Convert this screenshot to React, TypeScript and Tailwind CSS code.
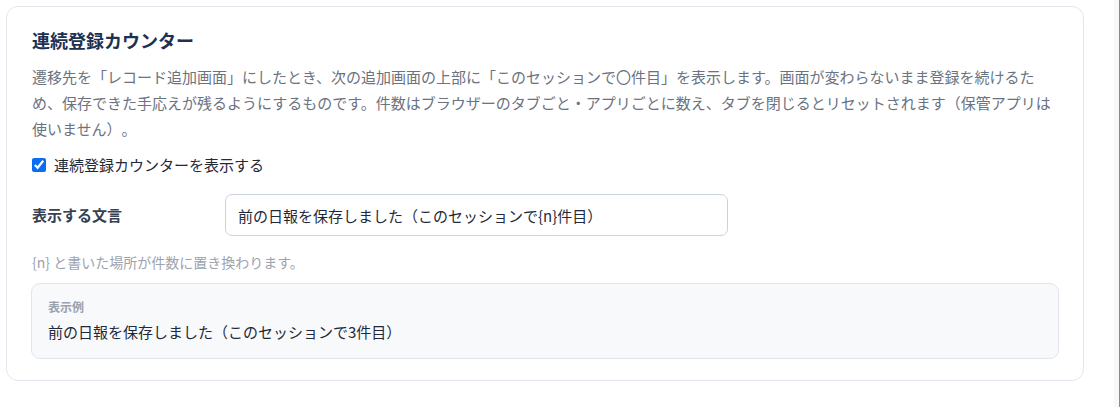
import React from "react";

export default function App() {
  return (
    <div
      className="flex w-[1120px] h-[407px] bg-white overflow-hidden [text-spacing-trim:space-all]"
      style={{ fontFamily: '"Noto Sans CJK JP", "Noto Sans", sans-serif' }}
    >
      <div className="flex-1 pl-[6px] pt-[6px]">
        <div className="w-[1078px] rounded-[12px] border border-[#e3e7ed] bg-white px-[24px] pt-[20px] pb-[21px]">
          <h2 className="pl-[1px] text-[18px] leading-[26px] font-bold text-[#1d3150]">連続登録カウンター</h2>
          <p className="mt-[11px] pl-[1px] text-[15px] leading-[26px] text-[#6b7280] whitespace-nowrap">
            遷移先を「レコード追加画面」にしたとき、次の追加画面の上部に「このセッションで〇件目」を表示します。画面が変わらないまま登録を続けるた
            <br />
            め、保存できた手応えが残るようにするものです。件数はブラウザーのタブごと・アプリごとに数え、タブを閉じるとリセットされます（保管アプリは
            <br />
            使いません）。
          </p>
          <label className="mt-[12px] flex h-[22px] items-center gap-[8px] pl-[1px]">
            <input
              type="checkbox"
              defaultChecked
              className="m-0 h-[14px] w-[14px] accent-[#0b6df2]"
            />
            <span className="text-[15px] leading-[22px] text-[#1f2937]">連続登録カウンターを表示する</span>
          </label>
          <div className="mt-[18px] flex items-center pl-[1px]">
            <div className="w-[193px] text-[15px] font-bold leading-[22px] text-[#374151]">表示する文言</div>
            <input
              type="text"
              defaultValue="前の日報を保存しました（このセッションで{n}件目）"
              className="h-[42px] w-[503px] rounded-[7px] border border-[#cbd3df] bg-white px-[12px] text-[15px] text-[#1f2937] outline-none"
            />
          </div>
          <p className="mt-[16px] pl-[1px] text-[14px] leading-[20px] text-[#9ca3af]">{"{n} と書いた場所が件数に置き換わります。"}</p>
          <div className="mt-[11px] rounded-[9px] border border-[#e2e6ec] bg-[#f7f9fb] px-[16px] pt-[14px] pb-[14px]">
            <div className="text-[12px] font-bold leading-[18px] text-[#9aa1ad]">表示例</div>
            <div className="mt-[4px] text-[15px] leading-[24px] text-[#1f2937]">前の日報を保存しました（このセッションで3件目）</div>
          </div>
        </div>
      </div>
      <div className="h-full w-[6px] border-r border-[#8c8c8c] bg-[#f8f8f8]" />
    </div>
  );
}
